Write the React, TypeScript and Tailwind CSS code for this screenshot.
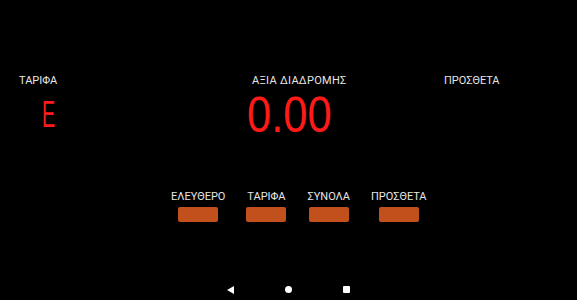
export default function App() {
  const modes = ['ΕΛΕΥΘΕΡΟ', 'ΤΑΡΙΦΑ', 'ΣΥΝΟΛΑ', 'ΠΡΟΣΘΕΤΑ'];

  return (
    <div className="flex h-[300px] w-[577px] flex-col overflow-hidden bg-black font-['Roboto',sans-serif] text-[11px] leading-[13px] text-[#e6e6e6]">
      {/* Top readout */}
      <div className="flex pt-[74px]">
        <div className="w-[252px] pl-[19px]">
          <div>ΤΑΡΙΦΑ</div>
          <div className="ml-[23px] mt-[10px] origin-left scale-x-[0.55] font-['Liberation_Sans',sans-serif] text-[36px] leading-none text-[#ff1a1a]">
            E
          </div>
        </div>
        <div className="w-[192px]">
          <div className="tracking-[0.3px]">ΑΞΙΑ ΔΙΑΔΡΟΜΗΣ</div>
          <div className="-ml-[5px] mt-[3px] origin-left scale-x-[0.87] font-['Liberation_Sans',sans-serif] text-[50px] leading-none text-[#ff1a1a]">
            0.00
          </div>
        </div>
        <div>ΠΡΟΣΘΕΤΑ</div>
      </div>

      {/* Mode buttons */}
      <div className="ml-[171px] mt-auto flex gap-[21px]">
        {modes.map((m) => (
          <div key={m} className="flex flex-col items-center">
            <div>{m}</div>
            <div className="mt-[4px] h-[15px] w-[40px] rounded-[2px] bg-[#c2501c]" />
          </div>
        ))}
      </div>

      {/* Android nav bar */}
      <div className="mt-[57px] flex h-[21px] items-center justify-center">
        <div className="flex w-[58px] justify-center">
          <svg width="7" height="8" viewBox="0 0 7 8"><path d="M0 4L7 0V8Z" fill="#fff" /></svg>
        </div>
        <div className="flex w-[58px] justify-center">
          <div className="h-[7px] w-[7px] rounded-full bg-white" />
        </div>
        <div className="flex w-[58px] justify-center">
          <div className="h-[7px] w-[7px] rounded-[1px] bg-white" />
        </div>
      </div>
    </div>
  );
}
